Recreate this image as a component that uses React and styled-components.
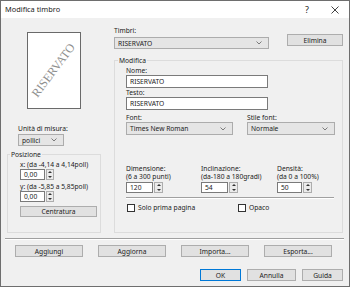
import React from 'react';
import styled, { createGlobalStyle } from 'styled-components';

const GlobalStyle = createGlobalStyle`
  html, body {
    margin: 0;
    padding: 0;
    background: #ffffff;
    overflow: hidden;
  }
`;

// Dialog frame
const Window = styled.div`
  width: 350px;
  height: 287px;
  box-sizing: border-box;
  border: 1px solid #6e6e6e;
  background: #f0f0f0;
  display: flex;
  flex-direction: column;
  font-family: "Noto Sans", "Liberation Sans", sans-serif;
  font-size: 6.7px;
  line-height: 9px;
  color: #222;
`;

const TitleBar = styled.div`
  height: 17px;
  flex: none;
  background: #ffffff;
  display: flex;
  align-items: center;
  padding-left: 4px;
`;

const Title = styled.span`
  flex: 1;
  font-size: 7.4px;
`;

const TitleButton = styled.span`
  width: 28px;
  height: 17px;
  display: flex;
  align-items: center;
  justify-content: center;
  font-size: 9px;
`;

const Body = styled.div`
  height: 215px;
  flex: none;
  box-sizing: border-box;
  display: flex;
  gap: 13px;
  padding: 8px 6px 0 6px;
`;

const LeftColumn = styled.div`
  width: 94px;
  display: flex;
  flex-direction: column;
`;

const RightColumn = styled.div`
  flex: 1;
  display: flex;
  flex-direction: column;
`;

// Stamp preview
const Page = styled.div`
  width: 54px;
  height: 77px;
  box-sizing: border-box;
  margin: 6px auto 0;
  background: #ffffff;
  border: 1px solid #6a6a6a;
  display: flex;
  align-items: center;
  justify-content: center;
  overflow: hidden;
`;

const StampText = styled.span`
  font-family: "Liberation Serif", serif;
  font-size: 12px;
  color: #8e8e8e;
  transform: rotate(-53deg);
  white-space: nowrap;
`;

const Label = styled.div`
  line-height: ${(p) => p.$lh || 8}px;
  margin-top: ${(p) => p.$mt || 0}px;
  margin-left: ${(p) => p.$ml || 0}px;
  white-space: nowrap;
`;

const Combo = styled.div`
  width: ${(p) => p.$w}px;
  height: ${(p) => p.$h || 12}px;
  box-sizing: border-box;
  margin-top: ${(p) => p.$mt || 0}px;
  margin-left: ${(p) => p.$ml || 0}px;
  background: #e5e5e5;
  border: 1px solid #acacac;
  display: flex;
  align-items: center;
  padding: 0 6px 0 3px;
  gap: 4px;
`;

const ComboValue = styled.span`
  flex: 1;
  white-space: nowrap;
`;

const TextBox = styled.div`
  width: ${(p) => p.$w}px;
  height: ${(p) => p.$h || 13}px;
  box-sizing: border-box;
  background: #ffffff;
  border: 1px solid #7a7a7a;
  display: flex;
  align-items: center;
  padding-left: 3px;
`;

const Button = styled.div`
  width: ${(p) => p.$w}px;
  height: ${(p) => p.$h || 12}px;
  box-sizing: border-box;
  margin-top: ${(p) => p.$mt || 0}px;
  margin-left: ${(p) => p.$ml || 0}px;
  background: #e1e1e1;
  border: 1px solid ${(p) => (p.$default ? '#0078d7' : '#adadad')};
  display: flex;
  align-items: center;
  justify-content: center;
  white-space: nowrap;
`;

// Group boxes
const Group = styled.div`
  flex: 1;
  box-sizing: border-box;
  margin-top: ${(p) => p.$mt || 0}px;
  border: 1px solid #dcdcdc;
  display: flex;
  flex-direction: column;
  padding-left: ${(p) => p.$pl || 0}px;
`;

const GroupTitle = styled.span`
  align-self: flex-start;
  margin: -5px 0 0 ${(p) => p.$ml || 2}px;
  padding: 0 1px;
  background: #f0f0f0;
  line-height: 9px;
`;

const TopRow = styled.div`
  display: flex;
  align-items: flex-start;
`;

const Stack = styled.div`
  display: flex;
  flex-direction: column;
`;

const FontRow = styled.div`
  display: flex;
  margin-top: 4px;
  gap: 14px;
`;

const SpinGrid = styled.div`
  display: grid;
  grid-template-columns: 75px 76px auto;
  margin-top: 30px;
`;

const SpinRow = styled.div`
  display: flex;
  margin-top: ${(p) => p.$mt || 0}px;
`;

const SpinBox = styled.div`
  width: ${(p) => p.$w}px;
  height: 11px;
  box-sizing: border-box;
  background: #ffffff;
  border: 1px solid #7a7a7a;
  display: flex;
  align-items: center;
  padding-left: 3px;
`;

const Spinner = styled.div`
  width: ${(p) => p.$w || 9}px;
  height: 11px;
  box-sizing: border-box;
  margin-left: 1px;
  border: 1px solid #adadad;
  background: #ebebeb;
  display: flex;
  flex-direction: column;
  align-items: center;
  justify-content: space-around;
`;

const Separator = styled.div`
  height: 1px;
  background: #a0a0a0;
  border-bottom: 1px solid #ffffff;
  margin: ${(p) => p.$margin};
`;

const CheckRow = styled.div`
  display: flex;
  margin-top: 4px;
  margin-left: 1px;
`;

const Check = styled.label`
  display: flex;
  align-items: center;
  gap: 3px;
  width: ${(p) => p.$w || 'auto'};
`;

const Box = styled.span`
  width: 8px;
  height: 8px;
  box-sizing: border-box;
  background: #ffffff;
  border: 1px solid #333333;
`;

const ActionRow = styled.div`
  display: flex;
  justify-content: space-between;
  padding: 0 17px 0 14px;
  margin-top: 5px;
`;

const FooterRow = styled.div`
  display: flex;
  justify-content: flex-end;
  gap: 6px;
  padding-right: 6px;
  margin-top: 12px;
`;

const Chevron = () => (
  <svg width="6" height="4" viewBox="0 0 6 4">
    <polyline points="0.5,0.5 3,3 5.5,0.5" fill="none" stroke="#606060" strokeWidth="0.8" />
  </svg>
);

const Arrow = ({ up }) => (
  <svg width="4" height="2" viewBox="0 0 4 2">
    <polygon points={up ? '0,2 4,2 2,0' : '0,0 4,0 2,2'} fill="#333" />
  </svg>
);

const Spin = ({ value, w, sw }) => (
  <SpinRow>
    <SpinBox $w={w}>{value}</SpinBox>
    <Spinner $w={sw}>
      <Arrow up />
      <Arrow />
    </Spinner>
  </SpinRow>
);

export default function App() {
  return (
    <>
      <GlobalStyle />
      <Window>
        <TitleBar>
          <Title>Modifica timbro</Title>
          <TitleButton>?</TitleButton>
          <TitleButton>
            <svg width="8" height="8" viewBox="0 0 8 8">
              <path d="M0.5 0.5 L7.5 7.5 M7.5 0.5 L0.5 7.5" stroke="#111" strokeWidth="0.8" />
            </svg>
          </TitleButton>
        </TitleBar>

        <Body>
          <LeftColumn>
            <Page>
              <StampText>RISERVATO</StampText>
            </Page>
            <Label $lh={9} $mt={15} $ml={11}>Unità di misura:</Label>
            <Combo $w={46} $mt={1} $ml={11}>
              <ComboValue>pollici</ComboValue>
              <Chevron />
            </Combo>
            <Group $mt={8} $pl={12}>
              <GroupTitle $ml={-10}>Posizione</GroupTitle>
              <Label $lh={9} $mt={1}>x: (da -4,14 a 4,14poll)</Label>
              <Spin value="0,00" w={25} sw={8} />
              <Label $lh={9} $mt={2}>y: (da -5,85 a 5,85poll)</Label>
              <Spin value="0,00" w={25} sw={8} />
              <Button $w={77} $h={11} $mt={4}>Centratura</Button>
            </Group>
          </LeftColumn>

          <RightColumn>
            <TopRow>
              <Stack>
                <Label $lh={9}>Timbri:</Label>
                <Combo $w={155} $mt={2}>
                  <ComboValue>RISERVATO</ComboValue>
                  <Chevron />
                </Combo>
              </Stack>
              <Button $w={56} $mt={8} style={{ marginLeft: 'auto' }}>Elimina</Button>
            </TopRow>

            <Group $mt={11} $pl={11}>
              <GroupTitle $ml={-8}>Modifica</GroupTitle>
              <Label $mt={2}>Nome:</Label>
              <TextBox $w={142}>RISERVATO</TextBox>
              <Label $mt={1}>Testo:</Label>
              <TextBox $w={142}>RISERVATO</TextBox>
              <FontRow>
                <Stack>
                  <Label>Font:</Label>
                  <Combo $w={107} $h={13}>
                    <ComboValue>Times New Roman</ComboValue>
                    <Chevron />
                  </Combo>
                </Stack>
                <Stack>
                  <Label>Stile font:</Label>
                  <Combo $w={88} $h={13}>
                    <ComboValue>Normale</ComboValue>
                    <Chevron />
                  </Combo>
                </Stack>
              </FontRow>
              <SpinGrid>
                <Stack>
                  <Label>Dimensione:<br />(6 a 300 punti)</Label>
                  <SpinRow $mt={1}><Spin value="120" w={27} sw={9} /></SpinRow>
                </Stack>
                <Stack>
                  <Label>Inclinazione:<br />(da-180 a 180gradi)</Label>
                  <SpinRow $mt={1}><Spin value="54" w={27} sw={9} /></SpinRow>
                </Stack>
                <Stack>
                  <Label>Densità:<br />(da 0 a 100%)</Label>
                  <SpinRow $mt={1}><Spin value="50" w={25} sw={9} /></SpinRow>
                </Stack>
              </SpinGrid>
              <Separator $margin="4px 8px 0 0" />
              <CheckRow>
                <Check $w="111px"><Box />Solo prima pagina</Check>
                <Check><Box />Opaco</Check>
              </CheckRow>
            </Group>
          </RightColumn>
        </Body>

        <Separator $margin="5px 5px 0 4px" />

        <ActionRow>
          <Button $w={68}>Aggiungi</Button>
          <Button $w={68}>Aggiorna</Button>
          <Button $w={68}>Importa...</Button>
          <Button $w={68}>Esporta...</Button>
        </ActionRow>

        <FooterRow>
          <Button $w={41} $default>OK</Button>
          <Button $w={49}>Annulla</Button>
          <Button $w={41}>Guida</Button>
        </FooterRow>
      </Window>
    </>
  );
}
